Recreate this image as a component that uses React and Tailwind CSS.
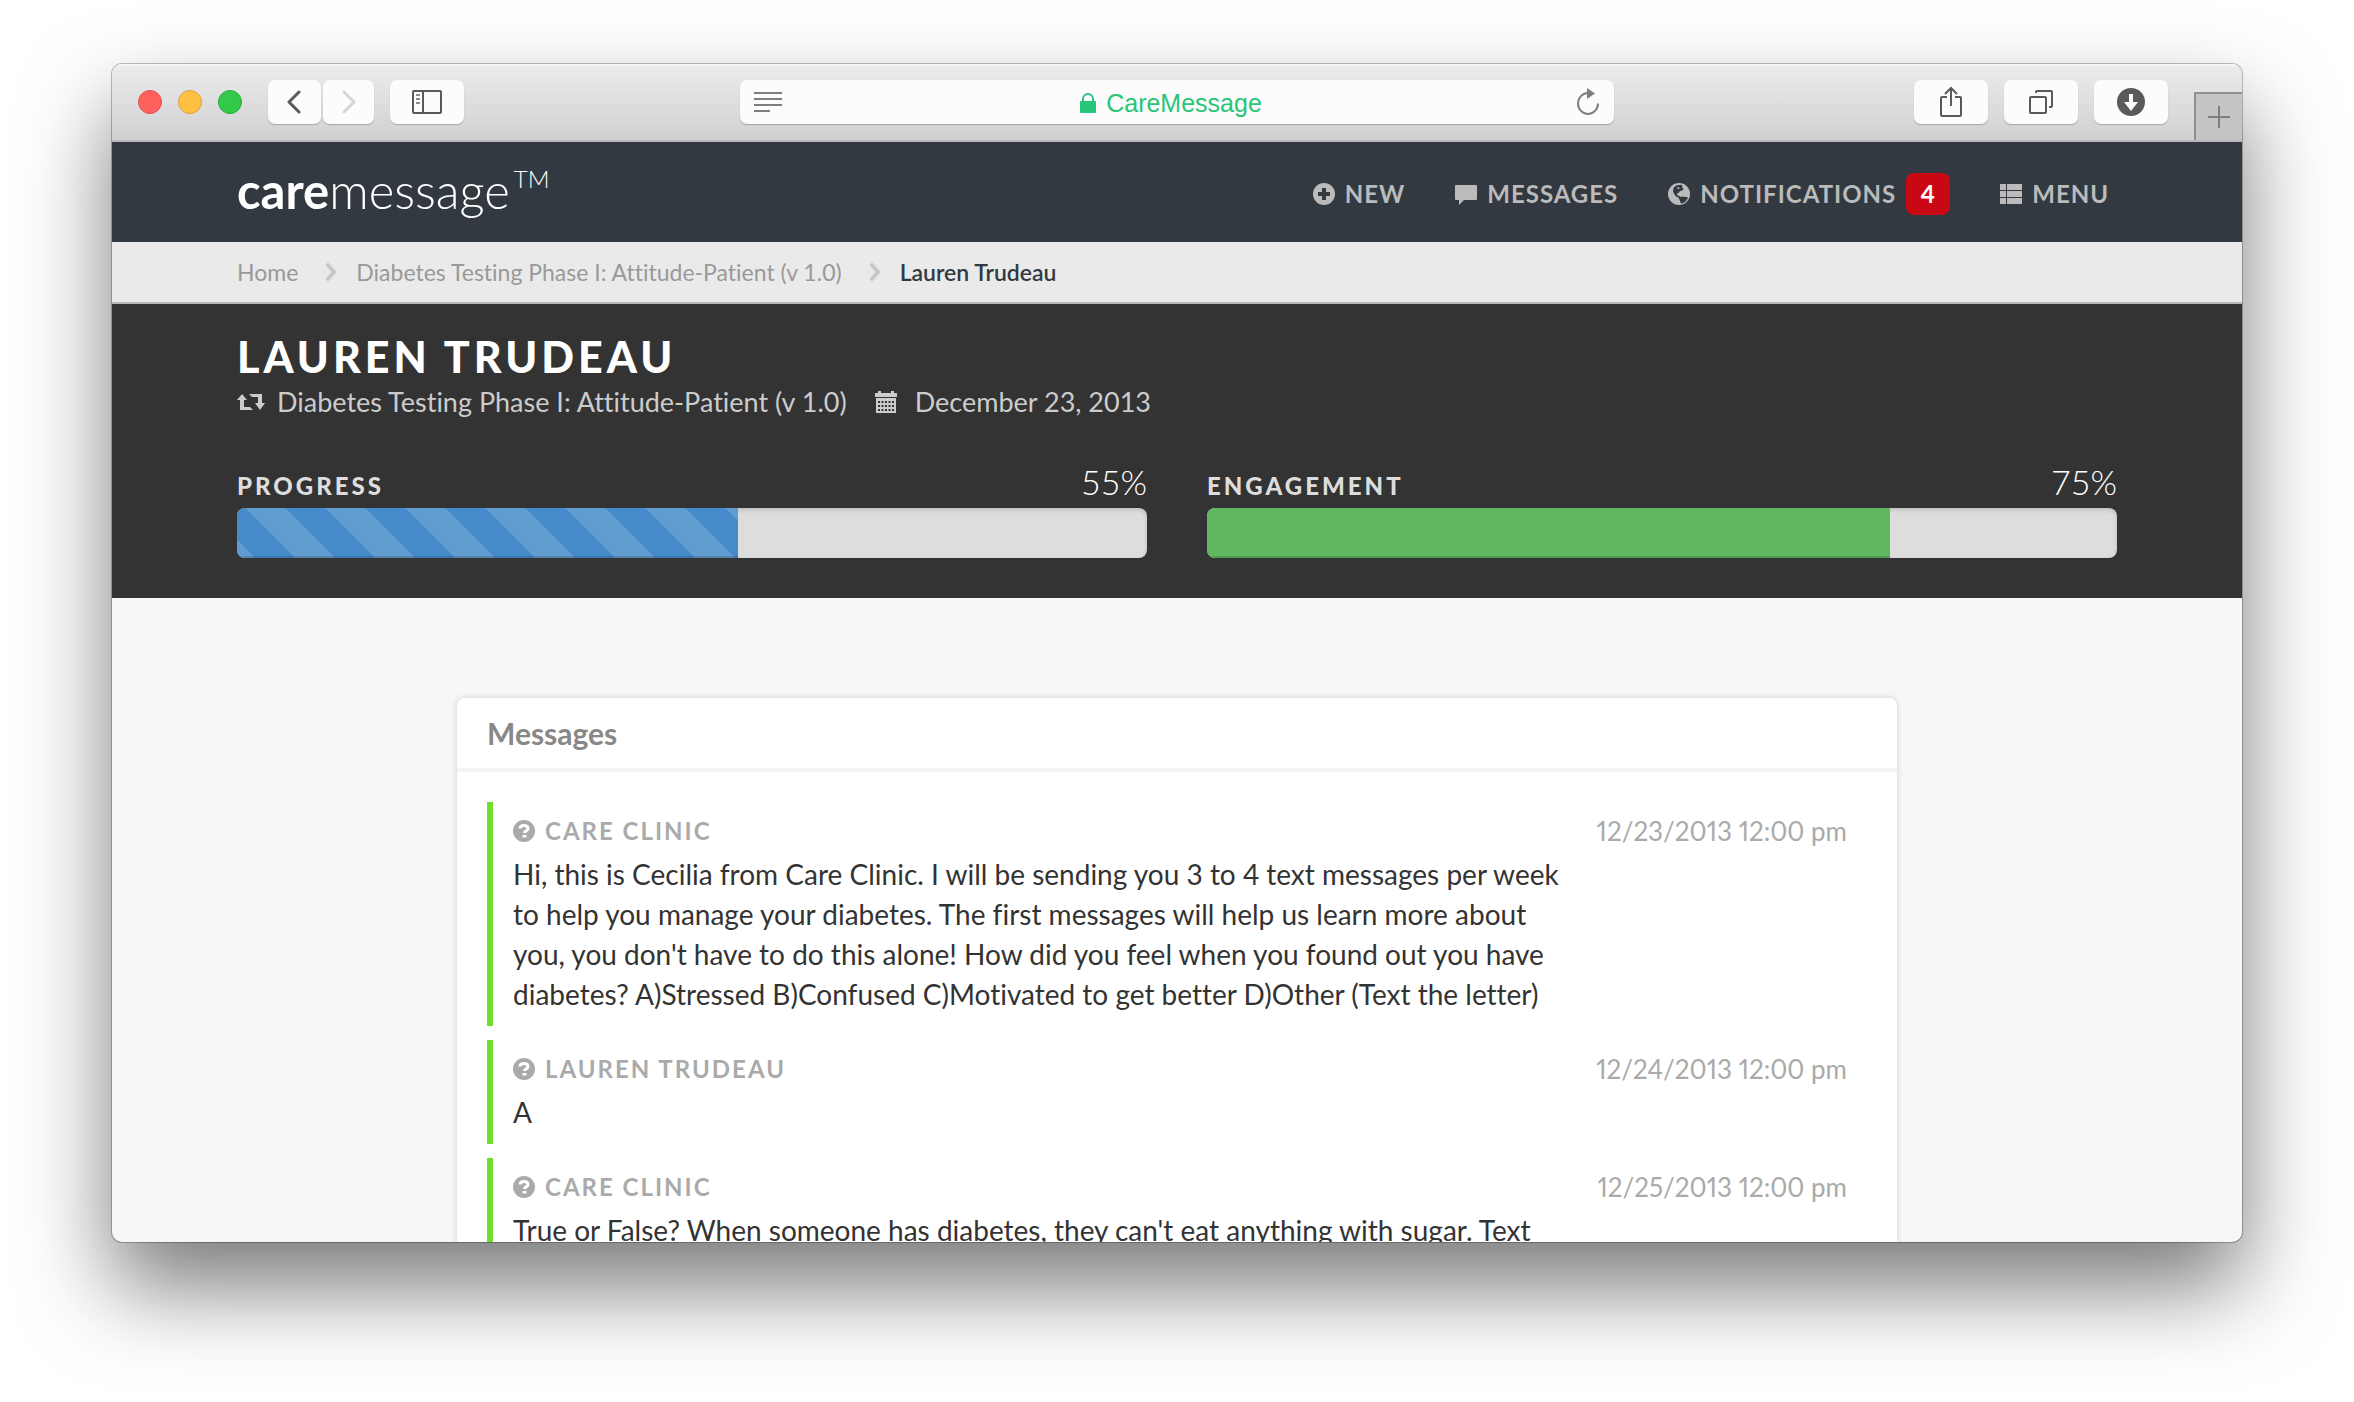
import React from 'react';

const svg = (w, h, children) => (
  <svg width={w} height={h} viewBox={`0 0 ${w} ${h}`} fill="none" aria-hidden="true" className="shrink-0">
    {children}
  </svg>
);

/* ---------- Browser toolbar icons ---------- */

const ChevronLeft = () =>
  svg(16, 26, <path d="M12 3 2 13l10 10" stroke="#5a5a5a" strokeWidth="3" strokeLinecap="round" strokeLinejoin="round" />);

const ChevronRight = () =>
  svg(16, 26, <path d="M3 3l10 10L3 23" stroke="#d6d6d6" strokeWidth="3" strokeLinecap="round" strokeLinejoin="round" />);

const SidebarIcon = () =>
  svg(
    30,
    24,
    <>
      <rect x="1" y="1" width="28" height="22" rx="1" stroke="#5a5a5a" strokeWidth="2" />
      <path d="M11 1v22" stroke="#5a5a5a" strokeWidth="2" />
      <path d="M4 5h4M4 9h4M4 13h4" stroke="#8c8c8c" strokeWidth="2" />
    </>
  );

const ReaderIcon = () => svg(28, 20, <path d="M0 1h28M0 7h28M0 13h28M0 19h16" stroke="#7f7f7f" strokeWidth="2" />);

const LockIcon = () =>
  svg(
    16,
    20,
    <>
      <rect x="0" y="8" width="16" height="12" rx="1" fill="#28c578" />
      <path d="M3 9V6a5 5 0 0 1 10 0v3" stroke="#28c578" strokeWidth="2" />
    </>
  );

const ReloadIcon = () =>
  svg(
    24,
    28,
    <>
      <path d="M22 15.500a10 10.500 0 1 1-10-10.500" stroke="#7f7f7f" strokeWidth="2" />
      <path d="M11 0l8 5.500-8 5.500z" fill="#7f7f7f" />
    </>
  );

const ShareIcon = () =>
  svg(
    24,
    32,
    <>
      <path d="M8 11H3a1 1 0 0 0-1 1v17a1 1 0 0 0 1 1h18a1 1 0 0 0 1-1V12a1 1 0 0 0-1-1h-5" stroke="#5a5a5a" strokeWidth="2" />
      <path d="M12 20V2M6 8l6-6 6 6" stroke="#5a5a5a" strokeWidth="2" />
    </>
  );

const TabsIcon = () =>
  svg(
    26,
    26,
    <>
      <rect x="2" y="8" width="16" height="16" rx="1" stroke="#5a5a5a" strokeWidth="2" />
      <path d="M8 4V3a1 1 0 0 1 1-1h14a1 1 0 0 1 1 1v14a1 1 0 0 1-1 1h-2" stroke="#5a5a5a" strokeWidth="2" />
    </>
  );

const DownloadIcon = () =>
  svg(
    28,
    28,
    <>
      <circle cx="14" cy="14" r="14" fill="#5a5a5a" />
      <path d="M12 6h4v8h5l-7 9-7-9h5z" fill="#fcfcfc" />
    </>
  );

const PlusIcon = () => svg(22, 22, <path d="M11 0v22M0 11h22" stroke="#7f7f7f" strokeWidth="2" />);

/* ---------- Site icons ---------- */

const PlusCircle = () =>
  svg(
    22,
    22,
    <>
      <circle cx="11" cy="11" r="11" fill="currentColor" />
      <path d="M11 5v12M5 11h12" stroke="#323940" strokeWidth="4" />
    </>
  );

const Comment = () =>
  svg(22, 22, <path d="M1 2h20a1 1 0 0 1 1 1v13a1 1 0 0 1-1 1H9l-5 5v-5H1a1 1 0 0 1-1-1V3a1 1 0 0 1 1-1z" fill="currentColor" />);

const Globe = () =>
  svg(
    22,
    22,
    <>
      <circle cx="11" cy="11" r="11" fill="currentColor" />
      <path
        d="M8 2.500l5-.8 2 1.500-1.500 1 2 1.300-1 2-2.500.5-1.200 1.800-1.800 1 .5 1.700 2 .5 1 2-1.500-.3-2.500-.7-2-2.500-1.500-3 .5-3.500zM10.500 15l3-1.500 5.500.5 1 1-2.500 3.500-3 2-2-.5-.5-2.500z"
        fill="#323940"
      />
      <path d="M9 4.500l2-.5.5 1.500-1.500.8z" fill="currentColor" />
    </>
  );

const ListIcon = () =>
  svg(
    22,
    20,
    <path d="M0 0h6v6H0zM7 0h15v6H7zM0 7h6v6H0zM7 7h15v6H7zM0 14h6v6H0zM7 14h15v6H7z" fill="currentColor" />
  );

const Question = () =>
  svg(
    22,
    22,
    <>
      <circle cx="11" cy="11" r="11" fill="currentColor" />
      <path d="M7 8.500C7 5.800 9 5.500 11 5.500s4 .8 4 3c0 2.500-3.500 2.200-3.500 4.500" stroke="#fff" strokeWidth="3" />
      <path d="M9.500 15h4v2.500h-4z" fill="#fff" />
    </>
  );

const Crumb = () =>
  svg(12, 18, <path d="M2 2l6 7-6 7" stroke="#c8c8c8" strokeWidth="4" strokeLinecap="round" strokeLinejoin="round" />);

const Retweet = () =>
  svg(28, 18, <path d="M5 1l5 6H7v7h6l3 3H3V7H0zM12 1h13v9h3l-5 7-5-7h3V4h-6z" fill="currentColor" />);

const Calendar = () =>
  svg(
    22,
    22,
    <>
      <path d="M3 0h3v2h10V0h3v2h3v4H0V2h3zM1 7h20v15H1z" fill="currentColor" />
      <path d="M3 11h16M3 15h16M3 19h16" stroke="#333" strokeWidth="2" strokeDasharray="2 1.500" />
    </>
  );

/* ---------- Browser chrome ---------- */

function ToolbarButton({ label, children, className = 'w-[74px]' }) {
  return (
    <button
      type="button"
      aria-label={label}
      className={`flex h-11 shrink-0 items-center justify-center rounded-[7px] bg-[#fcfcfc] shadow-[0_1px_1px_rgba(0,0,0,0.22)] ${className}`}
    >
      {children}
    </button>
  );
}

function Toolbar() {
  return (
    <header className="grid h-[78px] shrink-0 grid-cols-[1fr_41%_1fr] border-b-2 border-[#b9b7b9] bg-linear-to-b from-[#ecebed] to-[#d2d1d2] shadow-[inset_0_2px_0_#f6f5f6]">
      <div className="flex items-center pl-[26px]">
        <div className="flex gap-4">
          <button type="button" aria-label="Close" className="size-6 rounded-full border border-[#e2504c] bg-[#fe605b]" />
          <button type="button" aria-label="Minimize" className="size-6 rounded-full border border-[#dfa037] bg-[#ffc043]" />
          <button type="button" aria-label="Zoom" className="size-6 rounded-full border border-[#23ac3a] bg-[#34ca49]" />
        </div>
        <div className="ml-[26px] flex gap-0.5">
          <ToolbarButton label="Back" className="w-[53px]">
            <ChevronLeft />
          </ToolbarButton>
          <ToolbarButton label="Forward" className="w-[51px]">
            <ChevronRight />
          </ToolbarButton>
        </div>
        <div className="ml-4">
          <ToolbarButton label="Show sidebar">
            <SidebarIcon />
          </ToolbarButton>
        </div>
      </div>
      <div className="flex h-11 items-center self-center rounded-[7px] bg-[#fcfcfc] px-3.5 shadow-[0_1px_1px_rgba(0,0,0,0.25)]">
        <button type="button" aria-label="Reader">
          <ReaderIcon />
        </button>
        <button
          type="button"
          className="flex flex-1 items-center justify-center gap-2.5 pt-0.5 pr-4 font-['Liberation_Sans',sans-serif] text-[25px] leading-8 text-[#28c578]"
        >
          <LockIcon />
          CareMessage
        </button>
        <button type="button" aria-label="Reload">
          <ReloadIcon />
        </button>
      </div>
      <div className="flex items-center justify-end gap-4">
        <ToolbarButton label="Share">
          <ShareIcon />
        </ToolbarButton>
        <ToolbarButton label="Show all tabs">
          <TabsIcon />
        </ToolbarButton>
        <ToolbarButton label="Downloads">
          <DownloadIcon />
        </ToolbarButton>
        <button
          type="button"
          aria-label="New tab"
          className="ml-2.5 flex h-12 w-12 items-center justify-center self-end border-t-2 border-l-2 border-[#909090] bg-[#c6c5c6]"
        >
          <PlusIcon />
        </button>
      </div>
    </header>
  );
}

/* ---------- Site ---------- */

const container = 'mx-auto w-full max-w-[1880px]';

function NavLink({ icon, children }) {
  return (
    <a href="#" className="flex items-center gap-2.5 text-2xl font-bold tracking-[1px]">
      {icon}
      {children}
    </a>
  );
}

function SiteNav() {
  return (
    <div className="shrink-0 bg-[#323940]">
      <div className={`${container} flex h-[100px] items-center justify-between`}>
        <a href="#" className="flex items-start pb-1 text-[49px] leading-[60px] text-white">
          <span className="font-bold">care</span>
          <span className="font-light">message</span>
          <span className="pl-1 text-2xl leading-[38px] font-light">TM</span>
        </a>
        <nav className="flex items-center gap-[50px] pt-[3px] pr-2 text-[#bbb]">
          <NavLink icon={<PlusCircle />}>NEW</NavLink>
          <NavLink icon={<Comment />}>MESSAGES</NavLink>
          <NavLink icon={<Globe />}>
            NOTIFICATIONS
            <span className="flex h-[42px] w-11 items-center justify-center rounded-lg bg-[#c90813] text-white">4</span>
          </NavLink>
          <NavLink icon={<ListIcon />}>MENU</NavLink>
        </nav>
      </div>
    </div>
  );
}

function Breadcrumb() {
  return (
    <nav aria-label="Breadcrumb" className="shrink-0 border-b-2 border-[#b5b6b6] bg-[#eaeaea]">
      <ol className={`${container} flex h-[60px] items-center text-[23px] text-[#999]`}>
        <li>
          <a href="#">Home</a>
        </li>
        <li className="flex items-center">
          <span className="pr-[18px] pl-7">
            <Crumb />
          </span>
          <a href="#">Diabetes Testing Phase I: Attitude-Patient (v 1.0)</a>
        </li>
        <li className="flex items-center font-semibold text-[#323940]" aria-current="page">
          <span className="pr-[18px] pl-7">
            <Crumb />
          </span>
          Lauren Trudeau
        </li>
      </ol>
    </nav>
  );
}

const stripes =
  'bg-[#458bc9] bg-[linear-gradient(45deg,rgba(255,255,255,0.15)_25%,transparent_25%,transparent_50%,rgba(255,255,255,0.15)_50%,rgba(255,255,255,0.15)_75%,transparent_75%,transparent)] bg-size-[80px_80px] bg-position-[9px_0]';

function Meter({ label, value, fill }) {
  return (
    <div className="flex-1">
      <div className="flex items-end justify-between">
        <h2 className="text-2xl leading-9 font-black tracking-[3px] text-[#ddd]">{label}</h2>
        <span className="text-[34px] leading-[44px] font-light text-white">{value}%</span>
      </div>
      <div
        role="progressbar"
        aria-label={label}
        aria-valuenow={value}
        aria-valuemin={0}
        aria-valuemax={100}
        className="mt-1 h-[50px] overflow-hidden rounded-lg bg-[#ddd] shadow-[inset_0_2px_4px_rgba(0,0,0,0.15)]"
      >
        <div className={`h-full shadow-[inset_0_-2px_0_rgba(0,0,0,0.15)] ${fill}`} style={{ width: `${value}%` }} />
      </div>
    </div>
  );
}

function PatientHeader() {
  return (
    <section className="shrink-0 bg-[#333] pt-7 pb-10">
      <div className={container}>
        <h1 className="text-[43px] leading-[50px] font-black tracking-[4px] text-white">LAUREN TRUDEAU</h1>
        <div className="flex h-10 items-center text-[27px] text-[#ccc]">
          <span className="flex items-center gap-3">
            <Retweet />
            Diabetes Testing Phase I: Attitude-Patient (v 1.0)
          </span>
          <span className="ml-7 flex items-center gap-[18px]">
            <Calendar />
            December 23, 2013
          </span>
        </div>
        <div className="mt-[38px] flex gap-[60px]">
          <Meter label="PROGRESS" value={55} fill={stripes} />
          <Meter label="ENGAGEMENT" value={75} fill="bg-[#5fb760]" />
        </div>
      </div>
    </section>
  );
}

const messages = [
  {
    from: 'CARE CLINIC',
    date: '12/23/2013 12:00 pm',
    text: "Hi, this is Cecilia from Care Clinic. I will be sending you 3 to 4 text messages per week to help you manage your diabetes. The first messages will help us learn more about you, you don't have to do this alone! How did you feel when you found out you have diabetes? A)Stressed B)Confused C)Motivated to get better D)Other (Text the letter)",
  },
  { from: 'LAUREN TRUDEAU', date: '12/24/2013 12:00 pm', text: 'A' },
  {
    from: 'CARE CLINIC',
    date: '12/25/2013 12:00 pm',
    text: "True or False? When someone has diabetes, they can't eat anything with sugar. Text",
  },
];

function Message({ from, date, text }) {
  return (
    <li className="flex items-start justify-between gap-5 border-l-6 border-[#6ddf2f] py-3 pr-5 pl-5">
      <div className="max-w-[1060px] flex-1">
        <h3 className="mb-1.5 flex items-center gap-2.5 text-2xl leading-[34px] font-bold tracking-[2px] text-[#aaa]">
          <Question />
          {from}
        </h3>
        <p className="text-[28px] leading-10 text-[#333]">{text}</p>
      </div>
      <time className="text-[26px] leading-[34px] whitespace-nowrap text-[#aaa] proportional-nums">{date}</time>
    </li>
  );
}

export default function App() {
  return (
    <div className="flex h-screen flex-col bg-white px-28 pt-16 pb-40 font-[Lato,sans-serif] [font-variant-ligatures:no-common-ligatures]">
      <div className="flex min-h-0 flex-1 flex-col overflow-hidden rounded-[10px] bg-[#f7f7f7] shadow-[0_0_0_1px_rgba(0,0,0,0.25),0_45px_90px_rgba(0,0,0,0.53)]">
        <Toolbar />
        <SiteNav />
        <Breadcrumb />
        <PatientHeader />
        <main className="px-5 pt-[100px]">
          <section className="mx-auto w-full max-w-[1440px] rounded-lg bg-white shadow-[0_0_6px_rgba(0,0,0,0.16)]">
            <h2 className="border-b-4 border-[#f5f5f5] px-[30px] py-[15px] text-[30px] leading-10 font-bold text-[#888]">Messages</h2>
            <ul className="flex flex-col gap-3.5 p-[30px]">
              {messages.map((m) => (
                <Message key={m.date} {...m} />
              ))}
            </ul>
          </section>
        </main>
      </div>
    </div>
  );
}
